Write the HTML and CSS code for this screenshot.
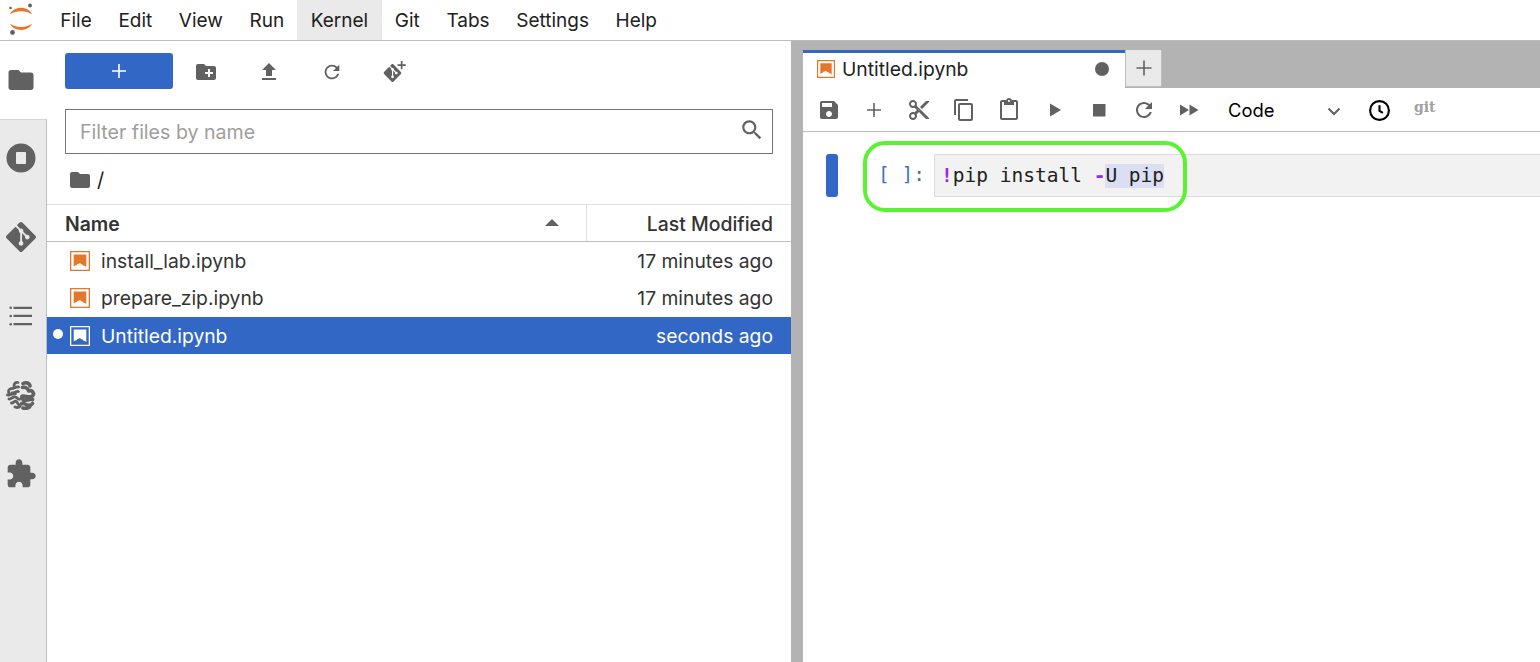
FILE: index.html
```html
<!DOCTYPE html>
<html lang="en">
<head>
<meta charset="utf-8">
<title>JupyterLab</title>
<link rel="stylesheet" href="styles.css">
</head>
<body>
<svg class="defs" width="0" height="0" aria-hidden="true">
  <defs>
    <symbol id="folder" viewBox="0 0 24 24"><path d="M10 4H4c-1.100 0-1.990.9-1.990 2L2 18c0 1.100.9 2 2 2h16c1.100 0 2-.9 2-2V8c0-1.100-.9-2-2-2h-8l-2-2z"/></symbol>
    <symbol id="nb" viewBox="0 0 20 20"><path fill-rule="evenodd" d="M0 0h20v20H0zM1.300 1.300v17.400h17.400V1.300z"/><path d="M3.700 3.500h12.600v12.600l-1.500-1.200-1.200-.1-1.200-1.400-1.100-.1L10 12l-1.300.8-1.100.1-1.200 1.400-1.200.1-1.500 1.200z"/></symbol>
    <symbol id="refresh" viewBox="0 0 24 24"><path d="M17.650 6.350C16.200 4.900 14.210 4 12 4c-4.420 0-7.990 3.580-7.990 8s3.570 8 7.990 8c3.730 0 6.840-2.550 7.730-6h-2.080c-.82 2.330-3.040 4-5.650 4-3.310 0-6-2.690-6-6s2.690-6 6-6c1.660 0 3.140.69 4.220 1.780L13 11h7V4l-2.350 2.350z"/></symbol>
    <symbol id="git" viewBox="0 0 24 24"><path d="M23.546 10.930L13.067.452c-.604-.603-1.582-.603-2.188 0L8.708 2.627l2.760 2.760c.645-.215 1.379-.07 1.889.441.516.515.658 1.258.438 1.900l2.658 2.660c.645-.223 1.387-.078 1.900.435.721.720.721 1.884 0 2.604-.719.719-1.881.719-2.600 0-.539-.541-.674-1.337-.404-1.996L12.860 8.955v6.525c.176.086.342.203.488.348.713.721.713 1.883 0 2.600-.719.721-1.889.721-2.609 0-.719-.719-.719-1.879 0-2.598.182-.18.387-.316.605-.406V8.835c-.217-.091-.424-.222-.6-.401-.545-.545-.676-1.342-.396-2.009L7.636 3.700.450 10.881c-.6.605-.6 1.584 0 2.189l10.480 10.477c.604.604 1.582.604 2.186 0l10.430-10.430c.605-.603.605-1.582 0-2.187"/></symbol>
  </defs>
</svg>

<div class="app">
  <header class="menubar">
    <div class="logo">
      <svg viewBox="0 0 44 40" width="44" height="40">
        <path class="logo-arc" d="M10 14.500C13 5.500 29 5.500 32 14.500 27 10 15 10 10 14.500z"/>
        <path class="logo-arc" d="M10 23.500C15 28 27 28 32 23.500 29 32 13 32 10 23.500z"/>
        <circle class="logo-dot" cx="30" cy="5.500" r="1.900"/>
        <circle class="logo-dot" cx="10.500" cy="8" r="1.300"/>
        <circle class="logo-dot" cx="12.500" cy="32.500" r="2.400"/>
      </svg>
    </div>
    <nav class="menus">
      <span class="menu">File</span>
      <span class="menu">Edit</span>
      <span class="menu">View</span>
      <span class="menu">Run</span>
      <span class="menu menu-open">Kernel</span>
      <span class="menu">Git</span>
      <span class="menu">Tabs</span>
      <span class="menu">Settings</span>
      <span class="menu">Help</span>
    </nav>
  </header>

  <div class="body">
    <aside class="rail">
      <div class="rail-item rail-active"><svg class="ico ico-30"><use href="#folder"/></svg></div>
      <div class="rail-rest">
        <div class="rail-item"><svg class="ico ico-30" viewBox="0 0 30 30"><path fill-rule="evenodd" d="M15 .5a14.500 14.500 0 1 0 0 29 14.500 14.500 0 0 0 0-29zM10 10c0-.6.4-1 1-1h8c.6 0 1 .4 1 1v10c0 .6-.4 1-1 1h-8c-.6 0-1-.4-1-1z"/></svg></div>
        <div class="rail-item"><svg class="ico ico-30"><use href="#git"/></svg></div>
        <div class="rail-item"><svg class="ico ico-26" viewBox="0 0 26 26"><path d="M5.500 3.700h18.500v2.300H5.500zM5.500 11.800h18.500v2.300H5.500zM5.500 20h18.500v2.300H5.500z"/><circle cx="2.700" cy="4.800" r="1.300"/><circle cx="2.700" cy="13" r="1.300"/><circle cx="2.700" cy="21.200" r="1.300"/></svg></div>
        <div class="rail-item"><svg class="ico ico-30 brain" viewBox="0 0 30 30"><path d="M12 2.500C9.500 2 8 3.500 8 6M12.500 7C9.500 6.500 8 9 5 8.500 3 9 2 11 3 13M12.500 11.500C10 11 8.500 13 6 13M1.500 15c3 .6 5-1.800 8-1.500M3 19c2.500.5 3.500-2.500 6-2.200 2 .2 2.200 2.500 4.500 2.500M5.500 23c2 .3 2.500-2.200 4.500-1.700s1 3.200 3.500 3.500M9 27c2 .8 3.500.8 5-.5"/><path class="brain-thick" d="M17 3.500c3-1.500 6.500-.5 7 2.500M16.500 7.500c3-.8 5.500.8 6 3.500 2.500-1 4 0 5 2.500 0 3.500-4 3.800-7 3-3-.8-5-.8-4.800 1.200.2 2 3 2.800 5.800 2.300 2.200-.4 3.800-1 5-.5M26.500 23.500c-1.800 2.500-5 2-7.500.5-2-1.200-3.500-1-3.500 0M23.500 27c-1.800 1.300-4.500 1.500-6.500 1"/></svg></div>
        <div class="rail-item"><svg class="ico ico-32" viewBox="0 0 24 24"><path d="M20.500 11H19V7c0-1.100-.9-2-2-2h-4V3.500C13 2.120 11.880 1 10.500 1S8 2.120 8 3.500V5H4c-1.100 0-1.990.9-1.990 2v3.800H3.500c1.490 0 2.700 1.210 2.700 2.700s-1.210 2.700-2.700 2.700H2V20c0 1.100.9 2 2 2h3.800v-1.500c0-1.490 1.210-2.700 2.700-2.700 1.490 0 2.700 1.210 2.700 2.700V22H17c1.100 0 2-.9 2-2v-4h1.500c1.380 0 2.500-1.120 2.500-2.500S21.880 11 20.500 11z"/></svg></div>
      </div>
    </aside>

    <section class="browser">
      <div class="fb-toolbar">
        <button class="launcher" type="button"><svg class="ico ico-18 plus" viewBox="0 0 18 18"><path d="M8.200 2h1.600v6.200H16v1.600H9.800V16H8.200V9.800H2V8.200h6.200z"/></svg></button>
        <span class="fb-tool"><svg class="ico ico-24" viewBox="0 0 24 24"><path d="M20 6h-8l-2-2H4c-1.110 0-1.990.89-1.990 2L2 18c0 1.110.89 2 2 2h16c1.110 0 2-.89 2-2V8c0-1.110-.89-2-2-2zm-1 8h-3v3h-2v-3h-3v-2h3V9h2v3h3v2z"/></svg></span>
        <span class="fb-tool"><svg class="ico ico-24" viewBox="0 0 24 24"><path d="M9 16h6v-6h4l-7-7-7 7h4zm-4 2h14v2H5z"/></svg></span>
        <span class="fb-tool"><svg class="ico ico-22"><use href="#refresh"/></svg></span>
        <span class="fb-tool"><svg class="ico ico-24" viewBox="0 0 24 24"><use href="#git" x="0.500" y="4" width="18" height="18"/><path d="M17.800 1h1.700v3.300h3.300V6h-3.300v3.300h-1.700V6h-3.300V4.300h3.300z"/></svg></span>
      </div>
      <div class="filter">
        <span class="filter-text">Filter files by name</span>
        <svg class="ico search" viewBox="0 0 24 24"><path d="M15.500 14h-.79l-.28-.27C15.410 12.590 16 11.110 16 9.500 16 5.910 13.090 3 9.500 3S3 5.910 3 9.500 5.910 16 9.500 16c1.610 0 3.090-.59 4.230-1.570l.27.28v.79l5 4.990L20.490 19l-4.990-5zm-6 0C7.010 14 5 11.990 5 9.500S7.010 5 9.500 5 14 7.010 14 9.500 11.990 14 9.500 14z"/></svg>
      </div>
      <div class="crumbs">
        <svg class="ico ico-24"><use href="#folder"/></svg>
        <span class="crumb-sep">/</span>
      </div>
      <div class="list-head">
        <div class="head-name"><span>Name</span><i class="sort-arrow"></i></div>
        <div class="head-mod">Last Modified</div>
      </div>
      <ul class="files">
        <li class="file"><i class="dot"></i><svg class="nb-ico"><use href="#nb"/></svg><span class="file-name">install_lab.ipynb</span><span class="file-time">17 minutes ago</span></li>
        <li class="file"><i class="dot"></i><svg class="nb-ico"><use href="#nb"/></svg><span class="file-name">prepare_zip.ipynb</span><span class="file-time">17 minutes ago</span></li>
        <li class="file file-selected"><i class="dot"></i><svg class="nb-ico"><use href="#nb"/></svg><span class="file-name">Untitled.ipynb</span><span class="file-time">seconds ago</span></li>
      </ul>
    </section>

    <div class="splitter"></div>

    <main class="main">
      <div class="tabbar">
        <div class="tab">
          <svg class="nb-ico tab-ico"><use href="#nb"/></svg>
          <span class="tab-title">Untitled.ipynb</span>
          <i class="tab-dirty"></i>
        </div>
        <div class="tab-add"><svg class="ico ico-24" viewBox="0 0 24 24"><path d="M11.200 4.500h1.600v6.700h6.700v1.600h-6.700v6.700h-1.600v-6.700H4.500v-1.600h6.700z"/></svg></div>
      </div>
      <div class="nb-toolbar">
        <span class="nb-tool"><svg class="ico ico-24" viewBox="0 0 24 24"><path d="M17 3H5c-1.110 0-2 .9-2 2v14c0 1.100.89 2 2 2h14c1.100 0 2-.9 2-2V7l-4-4zm-5 16c-1.660 0-3-1.340-3-3s1.340-3 3-3 3 1.340 3 3-1.340 3-3 3zm3-10H5V5h10v4z"/></svg></span>
        <span class="nb-tool"><svg class="ico ico-24" viewBox="0 0 24 24"><path d="M11.200 5h1.600v6.200H19v1.600h-6.200V19h-1.600v-6.200H5v-1.600h6.200z"/></svg></span>
        <span class="nb-tool"><svg class="ico ico-24" viewBox="0 0 24 24"><path d="M9.640 7.640c.23-.5.36-1.050.36-1.640 0-2.210-1.790-4-4-4S2 3.790 2 6s1.790 4 4 4c.59 0 1.140-.13 1.640-.36L10 12l-2.360 2.360C7.140 14.130 6.590 14 6 14c-2.210 0-4 1.790-4 4s1.790 4 4 4 4-1.790 4-4c0-.59-.13-1.140-.36-1.640L12 14l7 7h3v-1L9.640 7.640zM6 8c-1.100 0-2-.89-2-2s.9-2 2-2 2 .89 2 2-.9 2-2 2zm0 12c-1.100 0-2-.89-2-2s.9-2 2-2 2 .89 2 2-.9 2-2 2zm6-7.500c-.28 0-.5-.22-.5-.5s.22-.5.5-.5.5.22.5.5-.22.5-.5.5zM19 3l-6 6 2 2 7-7V3z"/></svg></span>
        <span class="nb-tool"><svg class="ico ico-24" viewBox="0 0 24 24"><path d="M16 1H4c-1.100 0-2 .9-2 2v14h2V3h12V1zm3 4H8c-1.100 0-2 .9-2 2v14c0 1.100.9 2 2 2h11c1.100 0 2-.9 2-2V7c0-1.100-.9-2-2-2zm0 16H8V7h11v14z"/></svg></span>
        <span class="nb-tool"><svg class="ico ico-24" viewBox="0 0 24 24"><path d="M19 2h-4.180C14.400.84 13.300 0 12 0c-1.300 0-2.400.84-2.820 2H5c-1.100 0-2 .9-2 2v16c0 1.100.9 2 2 2h14c1.100 0 2-.9 2-2V4c0-1.100-.9-2-2-2zm-7 0c.55 0 1 .45 1 1s-.45 1-1 1-1-.45-1-1 .45-1 1-1zm7 18H5V4h2v3h10V4h2v16z"/></svg></span>
        <span class="nb-tool"><svg class="ico ico-24" viewBox="0 0 24 24"><path d="M8 5.500v13l11-6.500z"/></svg></span>
        <span class="nb-tool"><svg class="ico ico-24" viewBox="0 0 24 24"><path d="M6 6h12.500v12.500H6z"/></svg></span>
        <span class="nb-tool"><svg class="ico ico-24"><use href="#refresh"/></svg></span>
        <span class="nb-tool"><svg class="ico ico-24" viewBox="0 0 24 24"><path d="M3 6.500v11l9-5.500zM12.500 6.500v11l9-5.500z"/></svg></span>
        <div class="cell-type"><span>Code</span><svg class="chev" viewBox="0 0 14 9" width="14" height="9"><path d="M1.500 1.500L7 7l5.500-5.500"/></svg></div>
        <svg class="clock" viewBox="0 0 24 24" width="23" height="23"><circle cx="12" cy="12" r="9.800"/><path d="M12 6.500V12.500l3.500 2"/></svg>
        <span class="git-label">git</span>
      </div>
      <div class="notebook">
        <div class="cell">
          <div class="collapser"></div>
          <div class="prompt">[ ]:</div>
          <div class="editor"><span class="op">!</span>pip install <span class="op">-</span><span class="sel">U pip</span></div>
          <div class="highlight-ring"></div>
        </div>
      </div>
    </main>
  </div>
</div>
</body>
</html>
```

FILE: styles.css
```css
* { box-sizing: border-box; }
html, body { margin: 0; height: 100%; }
body {
  font-family: Inter, "Liberation Sans", Arial, sans-serif;
  color: #212121;
  background: #fff;
  overflow: hidden;
}
.defs { position: absolute; }
.app { width: 1540px; height: 662px; display: flex; flex-direction: column; }

.ico { fill: #616161; display: block; flex: none; }
.ico-18 { width: 18px; height: 18px; }
.ico-22 { width: 22px; height: 22px; }
.ico-24 { width: 24px; height: 24px; }
.ico-26 { width: 26px; height: 26px; }
.ico-28 { width: 28px; height: 28px; }
.ico-30 { width: 30px; height: 30px; }
.ico-32 { width: 32px; height: 32px; }

/* menu bar */
.menubar {
  height: 41px;
  flex: none;
  display: flex;
  border-bottom: 1px solid #bdbdbd;
}
.logo { width: 46px; display: flex; }
.logo-arc { fill: #e5772c; }
.logo-dot { fill: #616161; }
.menus { display: flex; padding-left: 1px; }
.menu {
  height: 40px;
  padding: 0 13.300px;
  font-size: 19px;
  line-height: 41px;
  color: #212121;
}
.menu-open { background: #eaeaea; }

.body { flex: 1; display: flex; min-height: 0; }

/* left rail */
.rail { width: 47px; flex: none; display: flex; flex-direction: column; }
.rail-item { height: 78px; width: 42px; display: flex; align-items: center; justify-content: center; }
.rail-active { padding-bottom: 1px; }
.rail-rest {
  flex: 1;
  background: #eaeaea;
  border-top: 1px solid #d6d6d6;
  border-right: 1px solid #bdbdbd;
}
.rail-rest .rail-item { height: 79px; }
.rail-rest .rail-item:first-child { margin-top: -2px; }
.brain { fill: none; stroke: #616161; stroke-width: 2.800; stroke-linecap: round; stroke-linejoin: round; }
.brain-thick { stroke-width: 3.600; }

/* file browser */
.browser { width: 744px; flex: none; display: flex; flex-direction: column; }
.fb-toolbar { height: 68px; flex: none; display: flex; align-items: center; padding: 0 0 8px 18px; }
.launcher {
  width: 108px; height: 36px;
  border: 0; border-radius: 3px;
  background: #3367c6;
  display: flex; align-items: center; justify-content: center;
  padding: 0;
  margin-right: 1px;
}
.plus { fill: #fff; }
.fb-tool { width: 63px; display: flex; justify-content: center; margin-top: 2px; }

.filter {
  height: 45px; flex: none;
  margin: 0 18px;
  border: 1.500px solid #757575;
  display: flex; align-items: center; justify-content: space-between;
  padding: 1px 7px 0 14px;
}
.filter-text { font-size: 19.600px; color: #9e9e9e; }
.search { width: 26px; height: 26px; margin-top: -4px; }

.crumbs { height: 50px; flex: none; display: flex; align-items: center; padding: 1px 0 0 21px; gap: 5px; }
.crumb-sep { font-size: 20px; }

.list-head {
  height: 38px; flex: none;
  display: flex;
  border-top: 1px solid #e0e0e0;
  border-bottom: 1px solid #bdbdbd;
  font-size: 19.400px;
  font-weight: 500;
  color: #333;
  padding-top: 2px;
}
.head-name {
  flex: 1;
  display: flex; align-items: center; justify-content: space-between;
  padding: 0 27px 0 18px;
  font-weight: 600;
}
.sort-arrow {
  width: 0; height: 0;
  border-left: 7px solid transparent;
  border-right: 7px solid transparent;
  border-bottom: 7px solid #616161;
  margin-top: -4px;
}
.head-mod {
  width: 205px;
  border-left: 1px solid #e0e0e0;
  margin-top: -2px;
  display: flex; align-items: center; justify-content: flex-end;
  padding: 2px 18px 0 0;
}

.files { list-style: none; margin: 0; padding: 0; }
.file {
  height: 37px;
  display: flex; align-items: center;
  font-size: 19.300px;
  color: #333;
}
.dot { width: 10px; height: 10px; border-radius: 50%; margin: 0 7px 0 6px; flex: none; }
.nb-ico { width: 20px; height: 20px; flex: none; fill: #e5772c; }
.file-name { margin-left: 11px; flex: 1; }
.file-time { padding-right: 18px; }
.file-selected { background: #3367c6; color: #fff; margin-top: 1px; }
.file-selected .dot { background: #fff; margin-top: -3px; }
.file-selected .nb-ico { fill: #fff; }

.splitter { width: 12px; flex: none; background: #b3b3b3; }

/* main */
.main { flex: 1; min-width: 0; display: flex; flex-direction: column; }
.tabbar {
  height: 47px; flex: none;
  background: #b3b3b3;
  display: flex; align-items: flex-start;
  padding-top: 9px;
}
.tab {
  width: 322px; height: 38px;
  background: #fff;
  border-top: 3px solid #3367c6;
  display: flex; align-items: center;
  padding: 0 16px 3px 14px;
}
.tab-ico { width: 18px; height: 18px; }
.tab-title { flex: 1; margin-left: 7px; font-size: 19.300px; color: #212121; }
.tab-dirty { width: 14px; height: 14px; border-radius: 50%; background: #616161; }
.tab-add {
  width: 37px; height: 37px;
  background: #eaeaea;
  border: 1px solid #bdbdbd; border-top: 0;
  display: flex; align-items: center; justify-content: center;
}
.nb-toolbar {
  height: 44px; flex: none;
  display: flex; align-items: center;
  border-bottom: 1px solid #bdbdbd;
  padding: 1px 0 0 14px;
}
.nb-tool { width: 45px; flex: none; display: flex; justify-content: flex-start; }
.cell-type {
  width: 113px;
  margin-left: 6px;
  display: flex; align-items: center; justify-content: space-between;
  font-size: 18.400px;
  color: #000;
}
.chev { fill: none; stroke: #616161; stroke-width: 2; margin-top: 2px; }
.clock { margin-left: 27px; fill: none; stroke: #000; stroke-width: 2.200; }
.git-label {
  margin-left: 23px; margin-top: -7px;
  font-family: "DejaVu Serif", "Liberation Serif", serif;
  font-size: 14px; font-weight: bold;
  color: #a0a0a0;
}

.notebook { flex: 1; padding-top: 22px; box-shadow: inset 0 2px 2px -2px rgba(0,0,0,.1); }
.cell { position: relative; display: flex; height: 43px; padding-left: 23px; }
.collapser { width: 12px; height: 43px; border-radius: 3px; background: #3367c6; }
.prompt {
  width: 96px;
  padding: 0 9px 0 0;
  text-align: right;
  font-family: "DejaVu Sans Mono", monospace;
  font-size: 19.500px;
  line-height: 42px;
  color: #3d77b8;
  white-space: pre;
}
.editor {
  flex: 1;
  background: #f2f2f2;
  border: 1px solid #dcdcdc;
  border-right: 0;
  padding-left: 6px;
  font-family: "DejaVu Sans Mono", monospace;
  font-size: 19.500px;
  line-height: 42px;
  color: #212121;
  white-space: pre;
}
.op { color: #9a28ee; font-weight: bold; }
.sel { background: #dcdff2; display: inline-block; line-height: 24px; }
.highlight-ring {
  position: absolute;
  left: 60px; top: -13px;
  width: 324px; height: 71px;
  border: 4px solid #5af332;
  border-radius: 22px;
  pointer-events: none;
}
```
